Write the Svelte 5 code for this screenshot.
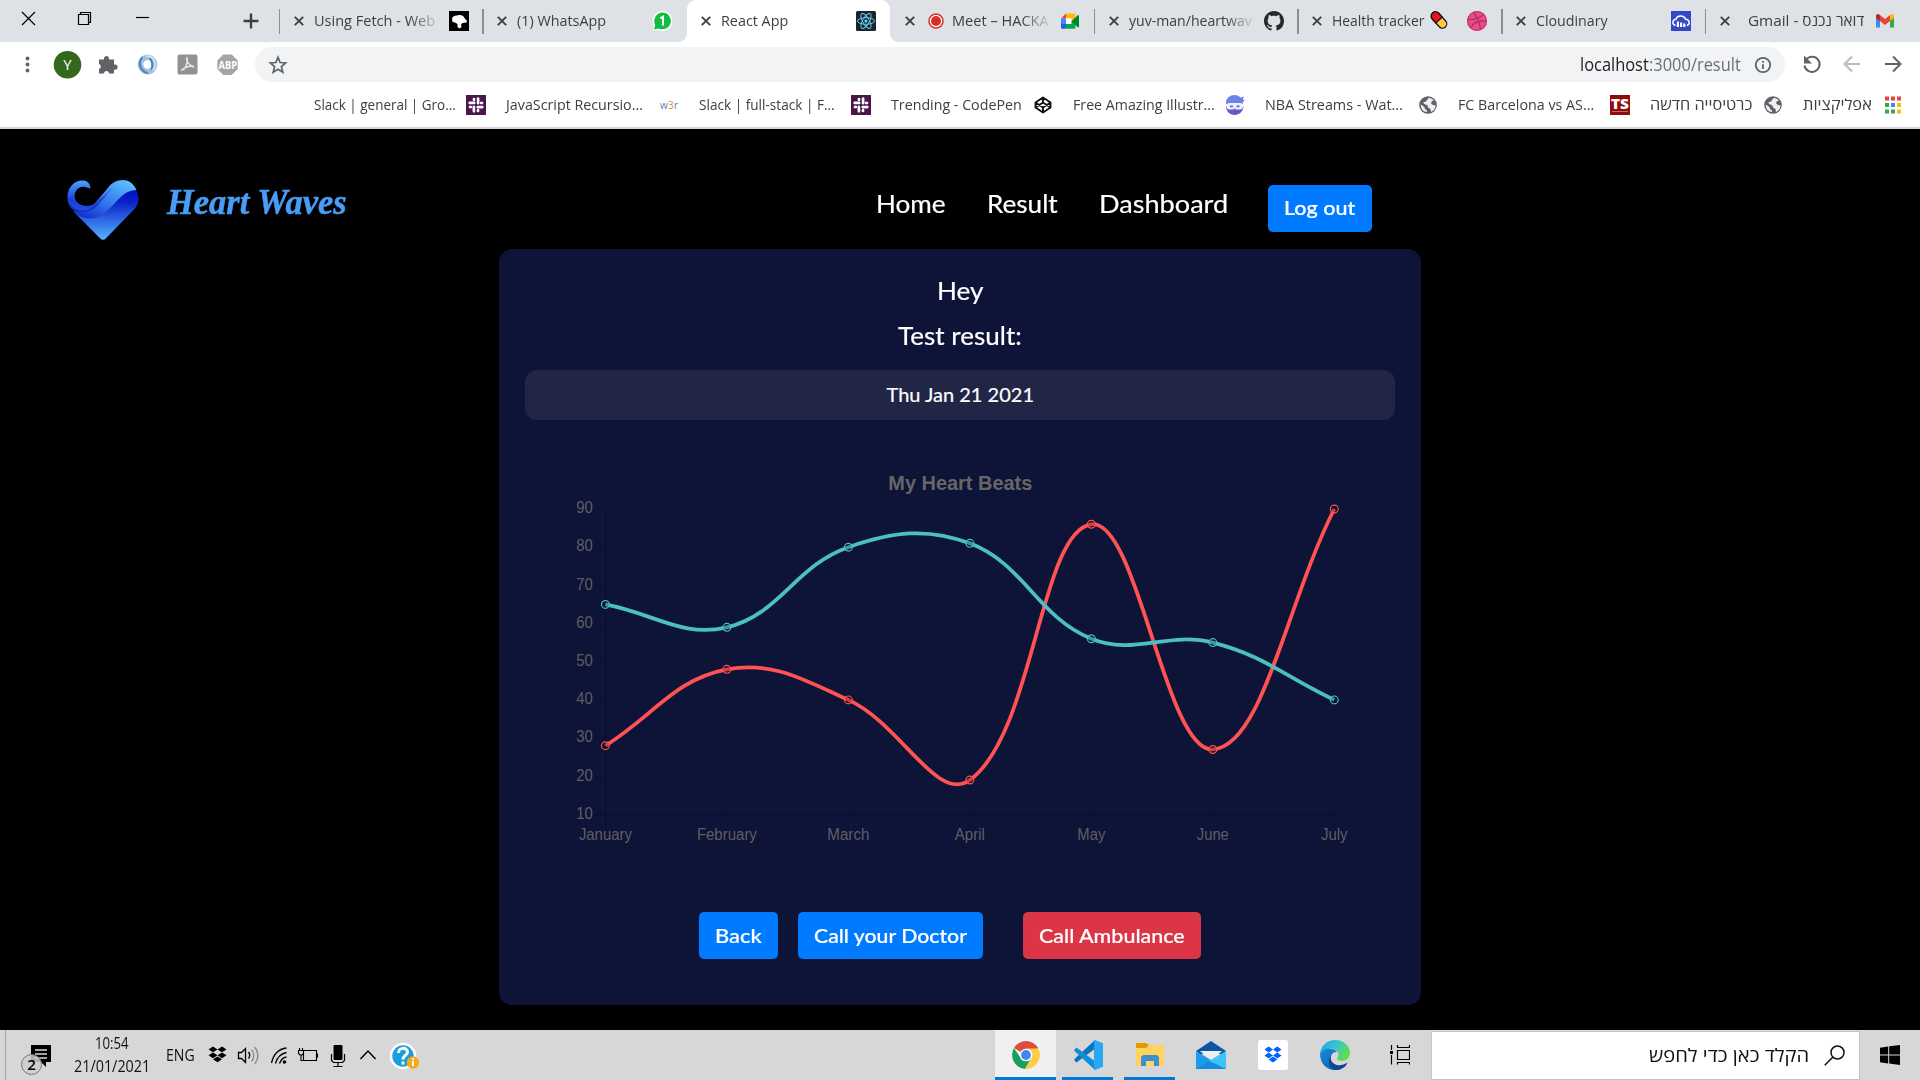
<script>
  import { onMount } from 'svelte';

  // Squeezes or stretches a run of text to the width of its slot.
  function fit(node, width) {
    const apply = () => {
      const natural = node.offsetWidth;
      if (natural) node.style.transform = `scaleX(${width / natural})`;
    };
    apply();
    document.fonts?.ready.then(apply);
  }

  const tabs = [
    { title: 'Using Fetch - Web', w: 121, icon: 'mdn', fade: true },
    { title: '(1) WhatsApp', w: 89, icon: 'whatsapp' },
    { title: 'React App', w: 67, icon: 'react', active: true },
    { title: 'Meet – HACKA', w: 97, icon: 'meet', fade: true, lead: 'record' },
    { title: 'yuv-man/heartwav', w: 123, icon: 'github', fade: true },
    { title: 'Health tracker', w: 92, icon: 'dribbble', trail: 'pill' },
    { title: 'Cloudinary', w: 72, icon: 'cloudinary' },
    { title: 'Gmail - דואר נכנס', w: 116, icon: 'gmail', inset: true }
  ];

  const bookmarks = [
    { title: 'Slack | general | Gro...', w: 142, slot: 152, icon: 'slack' },
    { title: 'JavaScript Recursio...', w: 137, slot: 152.5, icon: 'w3r' },
    { title: 'Slack | full-stack | F...', w: 136, slot: 152.5, icon: 'slack' },
    { title: 'Trending - CodePen', w: 131, slot: 141.5, icon: 'codepen' },
    { title: 'Free Amazing Illustr...', w: 142, slot: 152.5, icon: 'ninja' },
    { title: 'NBA Streams - Wat...', w: 138, slot: 153, icon: 'globe' },
    { title: 'FC Barcelona vs AS...', w: 136, slot: 152, icon: 'ts' },
    { title: 'כרטיסייה חדשה', w: 102, slot: 113, icon: 'globe' },
    { title: 'אפליקציות', w: 69, slot: 80, icon: 'apps' }
  ];

  const links = [
    { title: 'Home', w: 70 },
    { title: 'Result', w: 71 },
    { title: 'Dashboard', w: 129 }
  ];

  const months = [
    { name: 'January', w: 53 },
    { name: 'February', w: 60 },
    { name: 'March', w: 42 },
    { name: 'April', w: 30 },
    { name: 'May', w: 28 },
    { name: 'June', w: 32 },
    { name: 'July', w: 26.5 }
  ];
  const ticks = [90, 80, 70, 60, 50, 40, 30, 20, 10];
  const area = { left: 80.4, right: 809.3, top: 89, bottom: 394.4 };
  const px = (i) => area.left + (i * (area.right - area.left)) / 6;
  const py = (v) => area.top + ((90 - v) * (area.bottom - area.top)) / 80;
  const clampY = (y) => Math.max(area.top, Math.min(area.bottom, y));

  // Cardinal spline with tension 0.4, control points kept inside the plot.
  function spline(values) {
    const pts = values.map((v, i) => [px(i), py(v)]);
    const ctl = pts.map((p, i) => {
      const a = pts[i - 1] ?? p;
      const b = pts[i + 1] ?? p;
      const d0 = Math.hypot(p[0] - a[0], p[1] - a[1]);
      const d1 = Math.hypot(b[0] - p[0], b[1] - p[1]);
      const f0 = (0.4 * d0) / (d0 + d1);
      const f1 = (0.4 * d1) / (d0 + d1);
      return {
        before: [p[0] - f0 * (b[0] - a[0]), clampY(p[1] - f0 * (b[1] - a[1]))],
        after: [p[0] + f1 * (b[0] - a[0]), clampY(p[1] + f1 * (b[1] - a[1]))]
      };
    });
    return pts
      .map((p, i) => (i ? `C${ctl[i - 1].after} ${ctl[i].before} ${p}` : `M${p}`))
      .join(' ');
  }

  const series = [
    { color: '#ff5252', values: [28, 48, 40, 19, 86, 27, 90] },
    { color: '#4bc0c0', values: [65, 59, 80, 81, 56, 55, 40] }
  ];

  onMount(() => {
    document.title = 'React App';
  });
</script>

{#snippet fitted(text, w)}
  <span class="fit" style:width="{w}px"><span class="run" use:fit={w}>{text}</span></span>
{/snippet}

{#snippet dropbox(color)}
  <path fill={color} d="M5.500 1 10 3.900 5.500 6.800 1 3.900zM14.500 1 19 3.900 14.500 6.800 10 3.900zM5.500 6.900 10 9.800 5.500 12.700 1 9.800zM14.500 6.900 19 9.800 14.500 12.700 10 9.800zM10 10.900 14.500 13.800 10 16.700 5.500 13.800z" />
{/snippet}

{#snippet icon(name)}
  <svg class="icon" viewBox="0 0 20 20">
    {#if name === 'mdn'}
      <rect width="20" height="20" />
      <path fill="#fff" d="M3 7.500C4 5 6 4 8.500 4.500c3-1 6 0 7 2.500l2.500 3-.5 1.500-4 .5-1.500 1.500.5 2.500-2 1.500-2-1.500v-3l-2.500-1.500-2.500-.5z" />
    {:else if name === 'whatsapp'}
      <path fill="#fff" d="M10 0a10 10 0 1 1-4 19L1 20l1-5A10 10 0 0 1 10 0z" />
      <path fill="#12bd45" d="M10.500 1.500a8.400 8.400 0 1 1-3.800 15.900L2 18.400l1.200-4.500A8.400 8.400 0 0 1 10.500 1.500z" />
      <path fill="none" stroke="#fff" stroke-width="2" d="M8.300 7.300 11 5.800v8.700" />
    {:else if name === 'react'}
      <rect width="20" height="20" rx="1.500" fill="#20232a" />
      <g fill="none" stroke="#61dafb" stroke-width=".9">
        <ellipse cx="10" cy="10" rx="8.500" ry="3.300" />
        <ellipse cx="10" cy="10" rx="8.500" ry="3.300" transform="rotate(60 10 10)" />
        <ellipse cx="10" cy="10" rx="8.500" ry="3.300" transform="rotate(120 10 10)" />
      </g>
      <circle cx="10" cy="10" r="1.600" fill="#61dafb" />
    {:else if name === 'meet'}
      <path fill="#ea4335" d="M1 7.500 6 2.500v5z" />
      <path fill="#fbbc04" d="M6 2.500h8c1 0 1.500.6 1.500 1.500v4l-4 3V7.500H6z" />
      <path fill="#4285f4" d="M1 7.500h5v5.500H1z" />
      <path fill="#1967d2" d="M1 13h5v4.800H2.500A1.500 1.500 0 0 1 1 16.300z" />
      <path fill="#fff" d="M6 7.500h5.500V13H6z" />
      <path fill="#00ac47" d="M6 13h5.500V10l4 3v3.300c0 1-.6 1.500-1.500 1.500H6z" />
      <path fill="#00832d" d="m11.500 10.200 6.300-6c.6-.5 1.200-.2 1.200.5v11c0 .7-.6 1-1.200.5z" />
    {:else if name === 'github'}
      <path fill="#24292e" transform="scale(1.25)" d="M8 0C3.580 0 0 3.580 0 8c0 3.540 2.290 6.530 5.470 7.590.4.070.55-.17.55-.38 0-.19-.01-.82-.01-1.490-2.010.37-2.530-.49-2.690-.94-.09-.23-.48-.94-.82-1.130-.28-.15-.68-.52-.01-.53.63-.01 1.080.58 1.230.82.72 1.210 1.870.87 2.330.66.07-.52.28-.87.51-1.070-1.780-.2-3.640-.89-3.640-3.950 0-.87.31-1.590.82-2.150-.08-.2-.36-1.020.08-2.120 0 0 .67-.21 2.200.82.64-.18 1.320-.27 2-.27s1.360.09 2 .27c1.530-1.040 2.200-.82 2.200-.82.44 1.100.16 1.920.08 2.120.51.56.82 1.270.82 2.150 0 3.070-1.870 3.750-3.650 3.950.29.25.54.73.54 1.480 0 1.070-.01 1.930-.01 2.200 0 .21.15.46.55.38A8.010 8.010 0 0 0 16 8c0-4.420-3.580-8-8-8z" />
    {:else if name === 'dribbble'}
      <circle cx="10" cy="10" r="10" fill="#ea4c89" />
      <path fill="none" stroke="#b52e65" stroke-width="1.300" d="M6.500 1c3 4 6 10 7 17.500M.5 8.500c6 .5 12-1 16.500-5.500M3.500 17c3-5.500 9-8 16-6.500" />
      <circle cx="10" cy="10" r="9.400" fill="none" stroke="#c9376f" stroke-width="1.200" />
    {:else if name === 'cloudinary'}
      <rect width="20" height="20" fill="#3448c5" />
      <path fill="none" stroke="#fff" stroke-width="1.500" d="M4.500 14.500C.5 13 1.500 8.500 5 8.200 6 4.500 12.500 3.500 14.700 8.200c4 .2 4.800 4.800 1.300 6.300" />
      <path fill="#fff" d="M5.800 10.500h2.200V16H5.800zM9 11.500h2.200V16H9zM12.200 12.500h2.200V16h-2.200z" />
    {:else if name === 'gmail'}
      <path fill="#4285f4" d="M1 5v11.500h4V9z" />
      <path fill="#34a853" d="M15 9v7.500h4V5z" />
      <path fill="#fbbc04" d="m15 4 1.200-.8C17.500 2.500 19 3.400 19 5v2l-4 3z" />
      <path fill="#c5221f" d="M1 7V5c0-1.600 1.500-2.500 2.800-1.800L5 4v6z" />
      <path fill="#ea4335" d="m5 4 5 3.900L15 4v6l-5 3.900L5 10z" />
    {:else if name === 'slack'}
      <rect width="20" height="20" fill="#4a154b" />
      <g stroke="#fff" stroke-width="2.700" stroke-linecap="round">
        <path d="M8.200 7.900H3.700M12.100 8.200V3.700M11.800 12.100h4.500M7.900 11.800v4.500" />
        <path d="M8 4v.1M16 8h-.1M12 16v-.1M4 12h.1" />
        <path d="M15.800 8H15M12 15.800V15M4.200 12H5M8 4.200V5" stroke-width="2.400" />
      </g>
    {:else if name === 'w3r'}
      <text x="1" y="13.500" font-size="10" textLength="18" fill="#5b7fb8">w<tspan fill="#f07b3c">3</tspan>r</text>
    {:else if name === 'codepen'}
      <path fill="none" stroke="#111" stroke-width="1.900" stroke-linejoin="round" d="m10 2.500 7.500 5v5l-7.500 5-7.500-5v-5zM10 2.500v5M10 17.500v-5M2.500 7.500l7.500 5 7.500-5M2.500 12.500l7.500-5 7.500 5" />
    {:else if name === 'ninja'}
      <path fill="#6c83e6" d="M1 8C1 3 5 0 9.500 0c3 0 4.500 1 6 2.500l3.500-1-1 2.500 1.500 2-2 1 .5 2H1z" />
      <path fill="#6a56c4" d="M1 11h17.500c0 5-4 9-9 9S1 16 1 11z" />
      <rect x="1.500" y="8" width="16.500" height="6.500" rx="3" fill="#eef0ff" />
      <path fill="#6b63c9" d="M5 10.500h3v1.800H5zM11.500 10.500h3v1.800h-3z" />
      <path fill="#6a56c4" d="m7.500 14.500 2-1.200 2 1.200z" />
    {:else if name === 'globe'}
      <circle cx="10" cy="10" r="8.800" fill="#5f6368" />
      <path fill="#fff" d="M10.500 3c1.500-.5 4 .8 5.500 2.500l-2 .5-1 2.500 2 1.500 2.500.5c0 3-2 5.500-4.500 6.500l-.5-3-2.500-1.500-.5-2-3-1.500L5 7.500l3-1z" opacity=".9" />
      <path fill="#fff" d="m2.800 9.500 3.500 2.500.7 2 2 1.500v1.500C5.500 17 2.500 14 2.800 9.500z" opacity=".9" />
    {:else if name === 'ts'}
      <rect width="20" height="20" fill="#900c0c" />
      <text x="1" y="13.800" font-size="14" font-weight="800" textLength="18" lengthAdjust="spacingAndGlyphs" fill="#fff">TS</text>
      <path stroke="#c98080" stroke-width=".8" d="M2 16.500h16" />
    {:else if name === 'apps'}
      <path fill="#ea4335" d="M2 1.500h4v4H2zM8 1.500h4v4H8zM14 1.500h4v4h-4z" />
      <path fill="#34a853" d="M2 8h4v4H2zM2 14.500h4v4H2zM8 14.500h4v4H8z" />
      <path fill="#4285f4" d="M8 8h4v4H8z" />
      <path fill="#fbbc04" d="M14 8h4v4h-4zM14 14.500h4v4h-4z" />
    {/if}
  </svg>
{/snippet}

<div class="screen">
  <div class="tabstrip">
    <div class="window-controls">
      <svg width="279" height="42" viewBox="0 0 279 42" fill="none" stroke="#000" stroke-width="1.200">
        <path d="m22 12 13 13M35 12 22 25" />
        <path d="M78.500 14.500h10v10h-10zM80.500 14.500v-2h10v10h-2" />
        <path d="M136 17.500h13" />
        <path stroke="#3c4043" stroke-width="2.400" d="M251 13.500v15M243.500 21h15" />
      </svg>
    </div>
    {#each tabs as tab, i}
      <div class="tab" class:active={tab.active} class:bare={tab.active || tabs[i - 1]?.active}>
        <svg class="close" viewBox="0 0 10 10"><path d="m.8.8 8.400 8.400M9.200.8.8 9.200" /></svg>
        <div class="title" class:fade={tab.fade} class:inset={tab.inset}>
          {#if tab.lead}
            <svg class="record" viewBox="0 0 16 16"><circle cx="8" cy="8" r="7" fill="#fff" stroke="#d93025" stroke-width="1.500" /><circle cx="8" cy="8" r="5" fill="#d93025" /></svg>
          {/if}
          {@render fitted(tab.title, tab.w)}
          {#if tab.trail}
            <svg class="pill" viewBox="0 0 18 18"><g transform="rotate(48 9 9)" stroke="#111" stroke-width="1.200"><rect x="-.5" y="4.700" width="19" height="8.600" rx="4.300" fill="#ffc83d" /><path fill="#e81224" d="M9 4.700H3.800a4.300 4.300 0 0 0 0 8.600H9z" /></g></svg>
          {/if}
        </div>
        {@render icon(tab.icon)}
      </div>
    {/each}
  </div>

  <div class="toolbar">
    <svg width="255" height="43" viewBox="0 0 255 43">
      <g fill="#5f6368">
        <circle cx="27.500" cy="16.500" r="1.900" /><circle cx="27.500" cy="22.500" r="1.900" /><circle cx="27.500" cy="28.500" r="1.900" />
        <path d="M99 17.500h5V16a2.600 2.600 0 0 1 5 0v1.500h5v5h1a2.600 2.600 0 0 1 0 5.200h-1v3.800h-5a2.500 2.500 0 0 0-5 0h-5V27a2.600 2.600 0 0 0 0-5z" />
      </g>
      <circle cx="67.500" cy="22.700" r="13.800" fill="#33691e" />
      <text x="67.500" y="28" text-anchor="middle" font-size="15" fill="#fff">Y</text>
      <g transform="rotate(-12 147.500 22.500)">
        <ellipse cx="147.500" cy="22.500" rx="7" ry="7.200" fill="none" stroke="#9dbfe0" stroke-width="5.500" />
        <path fill="none" stroke="#4d7fb5" stroke-width="2" d="M144 14.500c-6 4-5 13 2 16.500M151 17c2 3 2 8-1 11" />
        <path fill="none" stroke="#cfe2f3" stroke-width="1.800" d="M148 14c8 1 9 11 3.500 15.500" />
      </g>
      <rect x="177.500" y="12.500" width="20" height="20" rx="2" fill="#929292" />
      <path fill="none" stroke="#e8e8e8" stroke-width="1.400" d="M187 16c-1.500 2 2 7.500 6.500 9 1.500-2-8-1-11.500 3 3 0 6.500-8 5-12z" />
      <path fill="#a5a5a5" d="m223.300 12.500h8.400l6 6v8.400l-6 6h-8.400l-6-6v-8.400z" />
      <text x="218.500" y="26.500" font-size="10.500" font-weight="700" textLength="18.500" lengthAdjust="spacingAndGlyphs" fill="#fff">ABP</text>
    </svg>
    <div class="omnibox">
      <svg class="star" viewBox="0 0 20 20"><path d="m10 2.200 2.100 5.300 5.600.4-4.300 3.700 1.400 5.600L10 14.200l-4.800 3 1.400-5.600-4.300-3.700 5.600-.4z" /></svg>
      <div class="url">
        {@render fitted('localhost', 68.500)}<em>{@render fitted(':3000/result', 92)}</em>
      </div>
      <svg class="info" viewBox="0 0 18 18"><circle cx="9" cy="9" r="7.200" /><path d="M9 8.200V13M9 5v1.800" /></svg>
    </div>
    <svg class="nav-icons" width="135" height="43" viewBox="0 0 135 43" fill="none" stroke="#5f6368" stroke-width="2">
      <path d="M21.500 17A7.600 7.600 0 1 1 19.500 23.500" /><path fill="#5f6368" stroke="none" d="M19 13.500v8h8z" />
      <path stroke="#babcbe" d="M75 22H60M67 14.500 59.500 22l7.500 7.500" />
      <path d="M100 22h15M108 14.500l7.500 7.500-7.500 7.500" />
    </svg>
  </div>

  <div class="bookmarks">
    {#each bookmarks as b}
      <div class="bookmark">
        <div class="label" style:width="{b.slot}px">{@render fitted(b.title, b.w)}</div>
        {@render icon(b.icon)}
      </div>
    {/each}
  </div>

  <main>
    <header>
      <svg class="heart" viewBox="0 0 72 61">
        <defs>
          <linearGradient id="body" x1="0" y1="0" x2="0" y2="1"><stop offset="0" stop-color="#0010c0" /><stop offset=".25" stop-color="#0a20c8" /><stop offset="1" stop-color="#55b4ff" /></linearGradient>
          <linearGradient id="wave" x1="0" y1="1" x2=".8" y2="0"><stop offset="0" stop-color="#0a1ec4" /><stop offset=".45" stop-color="#2e6fe8" /><stop offset="1" stop-color="#5cbcff" /></linearGradient>
          <linearGradient id="curl" x1="0" y1="0" x2="0" y2="1"><stop offset="0" stop-color="#4ba4fa" /><stop offset=".6" stop-color="#1a3fd8" /><stop offset="1" stop-color="#2050dc" /></linearGradient>
        </defs>
        <path fill="url(#body)" d="M69 11c4 7 3 14-2 19.500L39 59.200c-2 2-4 2-6 0L6 32c18 8 27-3 38-12C53 12 61 9 69 11z" />
        <path fill="url(#wave)" d="M6 32C13 34 22 31 29 23L40 10C48-1 63-3 69.500 11 57 11 52 21 43 29 31 42 18 42 9 34z" />
        <path fill="url(#curl)" d="M23.500 9.500c0-10-12-10-18-4C-1 12-1 22 4 29c9 9 22 3 29-5L47 7C41 12 35 19 30 23 21 31 8 26 7.500 17 8 9 15 6 20 8.500z" />
        <path fill="none" stroke="#0a20c4" stroke-width="1.500" opacity=".7" d="M2 25c7 11 20 9 29 0" />
      </svg>
      <div class="brand">{@render fitted('Heart Waves', 180)}</div>
      <nav>
        {#each links as link}
          <a href="#top">{@render fitted(link.title, link.w)}</a>
        {/each}
        <button class="btn">{@render fitted('Log out', 71)}</button>
      </nav>
    </header>

    <section class="card">
      <h2>{@render fitted('Hey', 46)}</h2>
      <h2>{@render fitted('Test result:', 124)}</h2>
      <div class="date">{@render fitted('Thu Jan 21 2021', 147)}</div>
      <svg class="chart" width="870" height="492" viewBox="0 0 870 492">
        <text class="chart-title" x="435.300" y="69.500" text-anchor="middle" textLength="144" lengthAdjust="spacingAndGlyphs">My Heart Beats</text>
        <g class="grid">
          {#each ticks as t}
            <path class:edge={t === 10} d="M{area.left - 12} {Math.round(py(t)) + 0.5}H{area.right}" />
          {/each}
          {#each months as _, i}
            <path class:edge={i === 0} d="M{Math.round(px(i)) + 0.5} {area.top}V{area.bottom + 12}" />
          {/each}
        </g>
        {#each ticks as t}
          <text class="tick" x="67.800" y={py(t) + 4.3} text-anchor="end" textLength="16.500" lengthAdjust="spacingAndGlyphs">{t}</text>
        {/each}
        {#each months as m, i}
          <text class="tick" x={px(i)} y="420.300" text-anchor="middle" textLength={m.w} lengthAdjust="spacingAndGlyphs">{m.name}</text>
        {/each}
        {#each series as s}
          <path d={spline(s.values)} fill="none" stroke={s.color} stroke-width="3.750" />
          {#each s.values as v, i}
            <circle cx={px(i)} cy={py(v)} r="3.900" fill="#000" fill-opacity=".2" stroke={s.color} stroke-width="1.200" />
          {/each}
        {/each}
      </svg>
      <div class="actions">
        <button class="btn back">{@render fitted('Back', 47)}</button>
        <button class="btn doctor">{@render fitted('Call your Doctor', 153)}</button>
        <button class="btn danger">{@render fitted('Call Ambulance', 146)}</button>
      </div>
    </section>
  </main>

  <footer class="taskbar">
    <svg width="66" height="50" viewBox="0 0 66 50">
      <path stroke="#a6a6a6" d="M5.500 0v50" />
      <path d="M31 15h20v17h-5v5l-5-5H31z" />
      <path stroke="#d7d7d7" stroke-width="1.300" d="M35 20h12M35 24h12M35 28h12" />
      <circle cx="31.500" cy="34.500" r="10" fill="#cecece" fill-opacity=".85" stroke="#777" />
      <text x="31.500" y="40" text-anchor="middle" font-size="15" font-weight="600">2</text>
    </svg>
    <div class="clock">
      {@render fitted('10:54', 34)}
      {@render fitted('21/01/2021', 76)}
    </div>
    <div class="lang">{@render fitted('ENG', 29)}</div>
    <svg width="226" height="50" viewBox="200 0 226 50" fill="none" stroke="#000" stroke-width="1.300">
      <g stroke="none" transform="translate(207.500 15.500)">{@render dropbox('#000')}</g>
      <path d="M238.500 22.500h3l4-4v14l-4-4h-3z" /><path d="M248.500 22c1.500 2 1.500 4.500 0 6.500" />
      <path stroke="#8a8a8a" d="M251.500 19.500c3 3.500 3 8.500 0 12M254.500 17c4.500 5 4.500 12 0 17" />
      <path d="M271.500 33c2-9 7-14 15-15M275.500 33.500c2-7 5-10 11-11M279.500 33.500c1.500-4 3.500-6 7-6.500" /><circle cx="284.500" cy="32" r="1.800" fill="#000" stroke="none" />
      <path stroke-width="1.100" d="M303.500 20.500h13v10h-13zM317.500 23.500v4M299.500 18v3M302.500 18v3M298.500 20.500h5v3l-1.500 1.500h-2l-1.500-1.500zM301 25.500v5h3" />
      <rect x="333.500" y="15" width="9" height="15" rx="1" fill="#000" stroke="none" /><path d="M331.500 24v6.500l2 2h9l2-2V24M338 32.500V37M333.500 36.500h9" stroke-width="1.200" />
      <path stroke-width="1.500" d="m360.500 29 7.500-8 7.500 8" />
      <circle cx="403" cy="26" r="12" fill="#1a9ed9" stroke="#fff" stroke-width="2.500" />
      <path stroke="#fff" stroke-width="3" d="M398.500 23c0-6 9-6 9-1 0 3.500-4.500 3.500-4.500 7.500M403 31.500v3" />
      <circle cx="413" cy="32.500" r="6.200" fill="#f5ac1c" stroke="none" /><path stroke="#fff" stroke-width="1.800" d="M413 31v5M413 28v1.700" />
    </svg>
    <div class="apps">
      <div class="app open current">
        <svg width="28" height="28" viewBox="0 0 28 28">
          <path fill="#dd4b3e" d="M14 14 2 7a14 14 0 0 1 24.200 0z" />
          <path fill="#1a9f5c" d="M2 7a14 14 0 0 0 11 21l6-10.500-9.500 1z" />
          <path fill="#ffcd42" d="M26.200 7.500H14l5.500 10L13 28A14 14 0 0 0 26.200 7.500z" />
          <circle cx="14" cy="14" r="6.300" fill="#fff" /><circle cx="14" cy="14" r="4.900" fill="#4285f4" />
        </svg>
      </div>
      <div class="app open narrow">
        <svg width="30" height="30" viewBox="0 0 30 30">
          <path fill="#0a74bd" d="m22 0-20 18.500c-1 .8-1 1.800 0 2.600L3.500 22.500 23 8z" />
          <path fill="#0f8fdb" d="M22 30 2 11.500C1 10.700 1 9.700 2 8.900L3.500 7.500 23 22z" />
          <path fill="#2aa7f3" d="M22 0 30 3.300v23.400L22 30c-.8.300-1 0-1-1V1c0-1 .2-1.300 1-1z" />
        </svg>
      </div>
      <div class="app open narrow">
        <svg width="28" height="26" viewBox="0 0 28 26">
          <path fill="#e09b00" d="M0 1h10l3 2-1 4H0z" /><path fill="#ffd35c" d="M0 6h10l3-3h15v21H0z" />
          <path fill="#3d8fd0" d="M5 24V15l2-2h14l2 2v9h-5v-5h-8v5z" />
        </svg>
      </div>
      <div class="app">
        <svg width="30" height="28" viewBox="0 0 30 28">
          <path fill="#0b56a4" d="M0 10 15 0l15 10-3 3H3z" /><path fill="#eee" d="M4 10h22L15 20z" />
          <path fill="#1e9be8" d="M0 10v18h30z" /><path fill="#3cc4f4" d="M30 10 13 20l17 8z" /><path fill="#178bdc" d="m13 20 17 8H0z" />
        </svg>
      </div>
      <div class="app">
        <svg width="30" height="30" viewBox="0 0 30 30"><rect width="30" height="30" rx="2.500" fill="#fff" /><g transform="translate(5.500 5.500) scale(.95 1.020)">{@render dropbox('#0062ff')}</g></svg>
      </div>
      <div class="app">
        <svg width="30" height="30" viewBox="0 0 30 30">
          <defs>
            <linearGradient id="edgeTop" x1="0" y1="0" x2="1" y2=".5"><stop offset="0" stop-color="#1b9de2" /><stop offset=".5" stop-color="#35c5d2" /><stop offset="1" stop-color="#62dd4e" /></linearGradient>
            <linearGradient id="edgeLow" x1="0" y1="0" x2="1" y2="1"><stop offset="0" stop-color="#1b8fe0" /><stop offset="1" stop-color="#0c4f9e" /></linearGradient>
          </defs>
          <path fill="url(#edgeTop)" d="M0 14C1 5 8 0 15 0c9 0 15 6 15 13 0 5-4 8-8 8-3 0-5-1-5-2.500 0-1 1.500-1.500 1.500-4C18.500 10 13 8 9 9c-4 .5-7 2-9 5z" />
          <path fill="url(#edgeLow)" d="M0 14c2-5 7-6 11-5 3 0 5 1 6 3-4-.5-7 3-6 8 1 5 7 8 13 6l3-1.500C24 28 20 30 15 30 6 30 0 23 0 14z" />
          <path fill="#0b4a92" d="M11.500 14c-2 3-1 8 3 10 4 2.500 9 1 13-1.500-1 4-7 8-13 7.500-5-1-8-8-3-16z" />
        </svg>
      </div>
      <div class="app task-view">
        <svg width="20" height="20" viewBox="0 0 20 20" fill="none" stroke="#000" stroke-width="1.200"><path d="M1.500 0v5M1.500 10v9.500M7.500 5.500h12v9h-12zM7.500 0v2.500h12V0M7.500 19.500v-2h12v2" /><rect y="6" width="3" height="3" fill="#000" stroke="none" /></svg>
      </div>
    </div>
    <div class="search">
      {@render fitted('הקלד כאן כדי לחפש', 160)}
      <svg width="21" height="21" viewBox="0 0 21 21" fill="none" stroke="#111" stroke-width="1.500"><circle cx="13.500" cy="7.500" r="6.500" /><path d="M9 12 .7 20.300" /></svg>
    </div>
    <div class="start">
      <svg width="20" height="20" viewBox="0 0 20 20"><path d="m0 2.700 8.200-1.200v8H0zM9.200 1.300 20 0v9.500H9.200zM0 10.500h8.200v8L0 17.300zM9.200 10.500H20V20L9.200 18.600z" /></svg>
    </div>
  </footer>
</div>

<style>
  :global(body) {
    margin: 0;
    overflow: hidden;
    background: #000;
  }
  .screen {
    width: 1920px;
    height: 1080px;
    display: flex;
    flex-direction: column;
    overflow: hidden;
    font-family: 'Open Sans', 'Noto Sans', 'DejaVu Sans', sans-serif;
    color: #3c4043;
  }
  svg {
    display: block;
    flex: none;
  }
  .fit {
    display: inline-block;
    flex: none;
    text-align: left;
    white-space: nowrap;
  }
  .run {
    display: inline-block;
    transform-origin: 0 50%;
  }
  .icon {
    width: 20px;
    height: 20px;
  }

  .tabstrip {
    display: flex;
    height: 42px;
    background: #dee1e6;
    font-size: 15px;
    line-height: 20px;
  }
  .window-controls {
    width: 279px;
  }
  .tab {
    position: relative;
    flex: none;
    display: flex;
    align-items: center;
    box-sizing: border-box;
    width: 203.75px;
    padding-left: 14.5px;
  }
  .tab::before {
    content: '';
    position: absolute;
    left: -0.5px;
    top: 9px;
    width: 1.5px;
    height: 25px;
    background: #8b8e92;
  }
  .tab.bare::before {
    display: none;
  }
  .tab.active {
    background: #fff;
    border-radius: 9px 9px 0 0;
  }
  .tab.active::before,
  .tab.active::after {
    content: '';
    display: block;
    position: absolute;
    top: auto;
    bottom: 0;
    width: 8px;
    height: 8px;
  }
  .tab.active::before {
    left: -8px;
    background: radial-gradient(circle at 0 0, transparent 7.5px, #fff 8px);
  }
  .tab.active::after {
    right: -8px;
    background: radial-gradient(circle at 100% 0, transparent 7.5px, #fff 8px);
  }
  .close {
    width: 10px;
    height: 10px;
    fill: none;
    stroke: #3c4043;
    stroke-width: 1.9;
  }
  .title {
    display: flex;
    align-items: center;
    width: 135px;
    margin-left: 10px;
    padding-bottom: 1.5px;
  }
  .title.inset {
    box-sizing: border-box;
    padding-left: 8.5px;
  }
  .title.fade {
    width: 123px;
    margin-right: 12px;
    -webkit-mask-image: linear-gradient(90deg, #000 78%, transparent 104%);
    mask-image: linear-gradient(90deg, #000 78%, transparent 104%);
  }
  .record {
    width: 16px;
    height: 16px;
    margin: 1px 8px 0 3.5px;
  }
  .pill {
    width: 18px;
    height: 18px;
    margin-left: 6px;
  }

  .toolbar {
    display: flex;
    height: 43px;
    background: #fff;
  }
  .omnibox {
    display: flex;
    align-items: center;
    box-sizing: border-box;
    width: 1530px;
    height: 35px;
    margin-top: 5px;
    padding: 0 13.5px 0 12.5px;
    border-radius: 18px;
    background: #f1f3f4;
  }
  .star {
    width: 20px;
    height: 20px;
    fill: none;
    stroke: #5f6368;
    stroke-width: 1.7;
  }
  .url {
    display: flex;
    margin-left: auto;
    padding-bottom: 2px;
    font-size: 17.5px;
    line-height: 24px;
    color: #202124;
  }
  .url em {
    font-style: normal;
    color: #6b6f73;
  }
  .info {
    width: 18px;
    height: 18px;
    margin-left: 13px;
    fill: none;
    stroke: #5f6368;
    stroke-width: 1.8;
  }
  .bookmarks {
    display: flex;
    gap: 20px;
    box-sizing: border-box;
    height: 44px;
    padding: 10px 0 0 314px;
    background: #fff;
    border-bottom: 2px solid #d5d7da;
    font-size: 15px;
    line-height: 18px;
  }
  .bookmark {
    display: flex;
    height: 20px;
  }

  main {
    flex: 1;
    background: #000;
    font-family: Lato, sans-serif;
    color: #fff;
  }
  header {
    display: flex;
    box-sizing: border-box;
    height: 120px;
    padding: 49.5px 0 0 66.5px;
  }
  .heart {
    width: 72px;
    height: 61px;
  }
  .brand {
    margin-left: 28px;
    font: italic 700 36px/46px 'Liberation Serif', serif;
    -webkit-text-stroke: 0.5px #489df6;
    color: #489df6;
  }
  nav {
    display: flex;
    gap: 41px;
    margin: 6px 0 0 529px;
  }
  nav a {
    font-size: 25px;
    line-height: 37px;
    color: #fff;
    text-decoration: none;
    -webkit-text-stroke: 0.2px #fff;
  }
  .btn {
    display: flex;
    align-items: center;
    justify-content: center;
    height: 47px;
    padding: 0 16.5px 2px;
    border: 0;
    border-radius: 5px;
    background: #007bff;
    color: #fff;
    font: 500 20px/30px Lato, sans-serif;
    -webkit-text-stroke: 0.2px #fff;
  }
  nav .btn {
    margin-left: -1px;
  }
  .card {
    box-sizing: border-box;
    width: 922px;
    height: 756px;
    margin: 0 auto;
    padding: 18.5px 26px 0;
    border-radius: 13px;
    background: #0e1338;
  }
  h2 {
    display: flex;
    justify-content: center;
    margin: 0;
    font-size: 25px;
    font-weight: 400;
    line-height: 45px;
    -webkit-text-stroke: 0.2px #fff;
  }
  .date {
    display: flex;
    justify-content: center;
    height: 50px;
    margin-top: 12.5px;
    border-radius: 12px;
    background: #212647;
    font-size: 20px;
    line-height: 49px;
    -webkit-text-stroke: 0.2px #fff;
  }
  .chart {
    font-family: 'Liberation Sans', Arial, sans-serif;
  }
  .chart-title {
    font-size: 20.5px;
    font-weight: 700;
    fill: #666;
  }
  .tick {
    font-size: 15.8px;
    fill: #5f5f62;
  }
  .grid path {
    stroke: #000;
    stroke-opacity: 0.1;
  }
  .grid .edge {
    stroke-opacity: 0.28;
  }
  .actions {
    display: flex;
    padding-left: 174px;
  }
  .back {
    width: 79px;
  }
  .doctor {
    width: 185px;
    margin: 0 40px 0 20px;
  }
  .danger {
    width: 178px;
    background: #dc3545;
  }

  .taskbar {
    display: flex;
    height: 50px;
    background: #d7d7d7;
    color: #111;
  }
  .clock {
    display: flex;
    flex-direction: column;
    align-items: center;
    width: 92px;
    padding-top: 2px;
    font-size: 15.5px;
    line-height: 22.5px;
  }
  .lang {
    width: 42px;
    padding-left: 8px;
    box-sizing: border-box;
    font-size: 15.5px;
    line-height: 50px;
  }
  .apps {
    display: flex;
    margin-left: 569px;
  }
  .app {
    display: flex;
    align-items: center;
    justify-content: center;
    box-sizing: border-box;
    width: 62px;
    height: 50px;
  }
  .app.open {
    border-bottom: 3px solid #0078d7;
    padding-top: 3px;
  }
  .app.current {
    width: 61px;
    background: #f0f0f0;
  }
  .app.narrow {
    width: 51px;
    margin: 0 5px 0 6px;
  }
  .app.task-view {
    width: 65px;
    padding-left: 3px;
  }
  .search {
    display: flex;
    flex: none;
    align-items: center;
    justify-content: flex-end;
    gap: 15px;
    box-sizing: border-box;
    width: 429px;
    height: 49px;
    margin-top: 0.5px;
    padding-right: 14px;
    border: 1px solid #c4c4c4;
    background: #fff;
    font-size: 18px;
  }
  .start {
    display: flex;
    flex: 1;
    align-items: center;
    justify-content: center;
  }
</style>
